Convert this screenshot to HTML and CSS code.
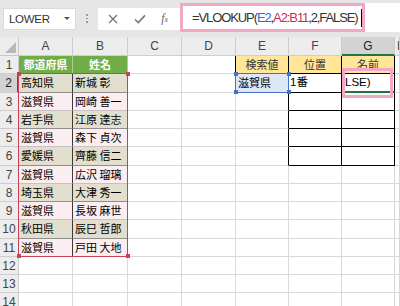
FILE: index.html
```html
<!doctype html>
<html lang="ja">
  <head>
    <meta charset="UTF-8" />
    <meta name="viewport" content="width=device-width, initial-scale=1.0" />
    <title>VLOOKUP</title>
    <link rel="stylesheet" href="styles.css">
  </head>
  <body>
    <div class="toolbar">
      <div class="name-box">
        <span>LOWER</span>
        <span class="drop"></span>
      </div>
      <div class="grip">
        <span></span><span></span><span></span>
      </div>
      <div class="fx-buttons">
        <svg class="btn" width="10" height="10" viewBox="0 0 10 10">
          <path d="M1 1 L9 9 M9 1 L1 9" stroke="#767676" stroke-width="1.3" fill="none" />
        </svg>
        <svg class="btn" width="12" height="10" viewBox="0 0 12 10">
          <path d="M1 5.5 L4.3 8.6 L11 1.4" stroke="#767676" stroke-width="1.6" fill="none" />
        </svg>
        <span class="fx"><i>f</i><sub>x</sub></span>
      </div>
      <div class="formula-bar">
        <div class="formula">=VLOOKUP(<span class="ref-blue">E2</span>,<span class="ref-red">A2:B11</span>,2,FALSE)<span class="cursor"></span></div>
        <div class="mark"></div>
      </div>
    </div>

    <div class="sheet" id="sheet"></div>

    <script>
      const sheet = document.getElementById("sheet");
      const letters = ["A", "B", "C", "D", "E", "F", "G", "H"];
      const people = [
        ["高知県", "新城 彰"],
        ["滋賀県", "岡崎 善一"],
        ["岩手県", "江原 達志"],
        ["滋賀県", "森下 貞次"],
        ["愛媛県", "齊藤 信二"],
        ["滋賀県", "広沢 瑠璃"],
        ["埼玉県", "大津 秀一"],
        ["滋賀県", "長坂 麻世"],
        ["秋田県", "辰巳 哲郎"],
        ["滋賀県", "戸田 大地"]
      ];
      const values = {
        A1: "都道府県", B1: "姓名",
        E1: "検索値", F1: "位置", G1: "名前",
        E2: "滋賀県", F2: "1番", G2: "LSE)"
      };
      people.forEach(function (p, i) {
        values["A" + (i + 2)] = p[0];
        values["B" + (i + 2)] = p[1];
      });

      // every cell gets its own grid slot so the overlays can share it
      function cell(cls, text, row, col) {
        const div = document.createElement("div");
        div.className = "cell " + cls;
        div.style.gridRow = row;
        div.style.gridColumn = col;
        if (text) div.textContent = text;
        sheet.appendChild(div);
        return div;
      }

      // header row
      cell("corner", "", 1, 1);
      letters.forEach(function (l, c) {
        cell("col-head" + (l === "G" ? " active" : ""), l, 1, c + 2);
      });

      for (let r = 1; r <= 14; r++) {
        cell("row-head" + (r === 2 ? " active" : ""), String(r), r + 1, 1);
        letters.forEach(function (l, c) {
          const key = l + r;
          let cls = "";
          if (r === 1 && c < 2) cls = "title";
          else if (r >= 2 && r <= 11 && c < 2) cls = r % 2 === 0 ? "band even" : "band odd";
          else if (r === 1 && c >= 4 && c <= 6) cls = "key-head";
          else if (r <= 6 && (c === 5 || c === 6)) cls = "boxed";
          if (c === 0 && r >= 2 && r <= 11) cls += " split";
          if (c === 4 && r <= 6) cls += " edge";
          if (c === 3 && r === 1) cls += " edge";
          if (key === "E2") cls += " lookup";
          if (key === "F2") cls += " latin";
          if (key === "G2") cls += " latin current";
          cell(cls, values[key], r + 1, c + 2);
        });
      }

      // reference highlights drawn over the cells, with a handle on each corner
      ["ref-box red", "ref-box blue"].forEach(function (cls) {
        const box = document.createElement("div");
        box.className = cls;
        ["tl", "tr", "bl", "br"].forEach(function (pos) {
          const h = document.createElement("span");
          h.className = "handle " + pos;
          box.appendChild(h);
        });
        sheet.appendChild(box);
      });
      const note = document.createElement("div");
      note.className = "note";
      sheet.appendChild(note);
    </script>
  </body>
</html>
```

FILE: styles.css
```css
body {
  margin: 0;
  width: 400px;
  height: 306px;
  overflow: hidden;
  background-color: #fff;
  font-family: "Noto Sans CJK JP", sans-serif;
}

/* formula bar */

.toolbar {
  display: flex;
  align-items: center;
  height: 37px;
  background-color: #e6e6e6;
}

.name-box {
  display: flex;
  align-items: center;
  justify-content: space-between;
  box-sizing: border-box;
  width: 73px;
  height: 22px;
  margin-left: 3px;
  padding: 0 5px 0 5px;
  background-color: #fff;
  border: 1px solid #dadada;
  font: 11.5px "Liberation Sans", sans-serif;
  color: #333;
  letter-spacing: -0.3px;
}

.drop {
  width: 0;
  height: 0;
  border-left: 3px solid transparent;
  border-right: 3px solid transparent;
  border-top: 3px solid #555;
}

.grip {
  display: flex;
  flex-direction: column;
  align-items: center;
  gap: 2px;
  width: 22px;
}

.grip span {
  width: 1.5px;
  height: 1.5px;
  background-color: #999;
}

.fx-buttons {
  display: flex;
  align-items: center;
  justify-content: space-around;
  box-sizing: border-box;
  width: 82px;
  height: 22px;
  padding: 0 4px 0 2px;
  background-color: #fff;
}

.fx {
  font: italic 12px "Liberation Serif", serif;
  color: #666;
}

.fx sub {
  font-size: 8px;
  vertical-align: 0;
}

.formula-bar {
  position: relative;
  flex: 1;
  height: 29px;
  margin-top: 3px;
  margin-bottom: 5px;
  background-color: #fff;
}

.formula {
  display: flex;
  align-items: center;
  height: 29px;
  padding-left: 12px;
  font: 13px "Liberation Sans", sans-serif;
  letter-spacing: -1.1px;
  color: #333;
}

.ref-blue {
  color: #3569c4;
}

.ref-red {
  color: #c2334f;
}

.cursor {
  width: 1px;
  height: 18px;
  margin-left: 3px;
  background-color: #000;
}

.mark {
  position: absolute;
  top: 0;
  left: 0;
  width: 185px;
  height: 29px;
  box-sizing: border-box;
  border: 3px solid #f3a7c5;
}

/* sheet */

.sheet {
  display: grid;
  grid-template-columns: 19px 54px 55px 54px 54px 53px 53px 53px 1fr;
  grid-template-rows: 19px;
  grid-auto-rows: 18.25px;
}

.cell {
  box-sizing: border-box;
  padding: 0 2px;
  border-right: 1px solid #d9d9d9;
  border-bottom: 1px solid #d9d9d9;
  font-size: 11px;
  line-height: 17px;
  white-space: nowrap;
  overflow: hidden;
  color: #000;
}

.corner {
  position: relative;
  background-color: #ededed;
  border-right-color: #c8c8c8;
  border-bottom-color: #c8c8c8;
}

.corner::after {
  content: "";
  position: absolute;
  right: 2px;
  bottom: 2px;
  border-left: 11px solid transparent;
  border-bottom: 11px solid #b8b8b8;
}

.col-head,
.row-head {
  background-color: #ededed;
  border-right-color: #cdcdcd;
  border-bottom-color: #cdcdcd;
  text-align: center;
  font: 12px "Liberation Sans", sans-serif;
  color: #444;
}

.col-head {
  line-height: 18px;
}

.row-head {
  padding: 0;
  line-height: 18px;
}

.col-head.active {
  background-color: #d3d3d3;
  border-bottom: 2px solid #217346;
  color: #222;
}

.row-head.active {
  background-color: #d3d3d3;
  border-right: 2px solid #217346;
  color: #222;
}

.title {
  background-color: #70ad47;
  border-right-color: #a9d08e;
  border-bottom-color: #70ad47;
  color: #fff;
  font-weight: bold;
  text-align: center;
}

.band.even {
  background-color: #e3dfcf;
  border-bottom-color: #8f8f8f;
}

.band.odd {
  background-color: #fcedf1;
  border-bottom-color: #c9c0c4;
}

.band.split {
  border-right-color: #3b3b3b;
}

.key-head {
  background-color: #ffe699;
  border-right-color: #000;
  border-bottom-color: #000;
  text-align: center;
  color: #333;
}

.boxed {
  border-right-color: #000;
  border-bottom-color: #000;
}

.edge {
  border-right-color: #000;
}

.lookup {
  background-color: #dde7f5;
}

.latin {
  font-family: "Liberation Sans", "Noto Sans CJK JP", sans-serif;
  font-size: 11.5px;
  padding-left: 1px;
}

.current {
  border-bottom: 2px solid #217346;
  padding-left: 3px;
}

/* formula reference boxes */

.ref-box {
  position: relative;
  margin: -1px 0 0 -1px;
  border: 1px solid;
}

.handle {
  position: absolute;
  width: 4px;
  height: 4px;
  background-color: inherit;
}

.handle.tl {
  top: -2.5px;
  left: -2.5px;
}

.handle.tr {
  top: -2.5px;
  right: -2.5px;
}

.handle.bl {
  bottom: -2.5px;
  left: -2.5px;
}

.handle.br {
  bottom: -2.5px;
  right: -2.5px;
}

.ref-box.red {
  grid-column: 2 / 4;
  grid-row: 3 / 13;
  border-color: #c8415a;
}

.ref-box.red .handle {
  background-color: #c8415a;
}

.ref-box.blue {
  grid-column: 6 / 7;
  grid-row: 3 / 4;
  border-color: #4472c4;
}

.ref-box.blue .handle {
  background-color: #4472c4;
}

.note {
  grid-column: 8 / 9;
  grid-row: 3 / 4;
  margin: -6px 2px -5px 0;
  border: 3px solid #f3a7c5;
}
```
